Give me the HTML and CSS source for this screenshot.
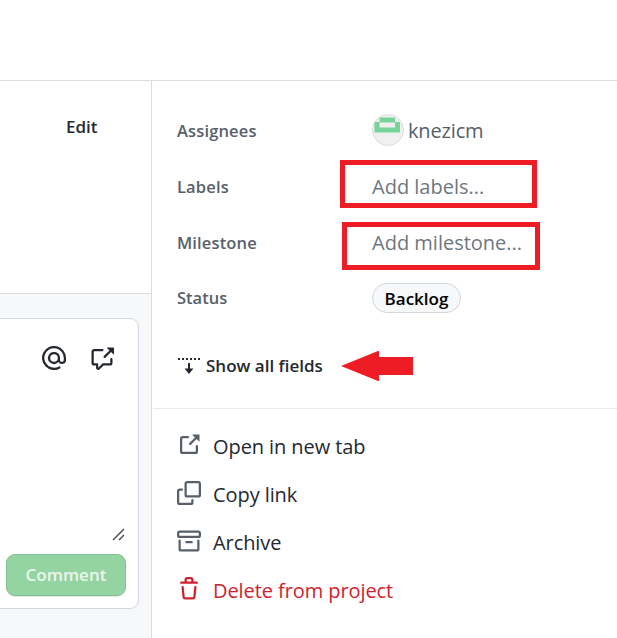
FILE: index.html
```html
<!DOCTYPE html>
<html lang="en">
<head>
<meta charset="utf-8">
<title>Project item</title>
<link rel="stylesheet" href="styles.css">
</head>
<body>
<header class="topbar"></header>
<div class="layout">
  <main class="content">
    <section class="description"><button class="edit">Edit</button></section>
    <section class="comments">
      <div class="editor">
        <div class="toolbar">
          <svg class="icon" viewBox="0 0 16 16"><path d="M4.75 2.37a6.501 6.501 0 0 0 6.5 11.26.75.75 0 0 1 .75 1.298A7.999 7.999 0 0 1 .989 4.148 8 8 0 0 1 16 7.75v1.5a2.75 2.75 0 0 1-5.072 1.475 3.999 3.999 0 0 1-6.65-4.19A4 4 0 0 1 12 8v1.25a1.25 1.25 0 0 0 2.5 0V7.867a6.5 6.5 0 0 0-9.75-5.496ZM10.5 8a2.5 2.5 0 1 0-5 0 2.5 2.5 0 0 0 5 0Z"/></svg>
          <svg class="icon" viewBox="0 0 16 16"><path d="M2.75 3.5a.25.25 0 0 0-.25.25v7.5c0 .138.112.25.25.25h2a.75.75 0 0 1 .75.75v2.19l2.72-2.72a.749.749 0 0 1 .53-.22h4.5a.25.25 0 0 0 .25-.25v-2.5a.75.75 0 0 1 1.5 0v2.5A1.75 1.75 0 0 1 13.25 13H9.06l-2.573 2.573A1.458 1.458 0 0 1 4 14.543V13H2.75A1.75 1.75 0 0 1 1 11.25v-7.5C1 2.784 1.784 2 2.75 2h5.5a.75.75 0 0 1 0 1.5ZM16 1.25v4.146a.25.25 0 0 1-.427.177L14.03 4.03l-3.75 3.75a.75.75 0 0 1-1.06-1.06l3.75-3.75-1.543-1.543A.25.25 0 0 1 11.604 1h4.146a.25.25 0 0 1 .25.25Z"/></svg>
        </div>
        <svg class="grip" viewBox="0 0 13 13"><path d="M1 12 12 1M7 12l5-5"/></svg>
        <button class="comment">Comment</button>
      </div>
    </section>
  </main>
  <aside class="sidebar">
    <dl class="fields">
      <div class="field"><dt>Assignees</dt><dd class="user">
        <svg class="avatar" viewBox="0 0 32 32"><circle cx="16" cy="16" r="15.5" fill="#f0f0f0" stroke="#dcdcdc"/><path fill="#76d499" fill-rule="evenodd" d="M7.500 3.500h15.500V8h5v10.500H2.500V8h5zM7.500 8.500v5H23v-5z"/></svg>
        <span class="name">knezicm</span></dd></div>
      <div class="field"><dt>Labels</dt><dd class="placeholder add-labels">Add labels...<i class="mark mark-labels"></i></dd></div>
      <div class="field"><dt>Milestone</dt><dd class="placeholder">Add milestone...<i class="mark mark-milestone"></i></dd></div>
      <div class="field status"><dt>Status</dt><dd><span class="pill">Backlog</span></dd></div>
    </dl>
    <div class="show-all">
      <svg class="expand" viewBox="0 0 24 24"><path class="dots" d="M1 5h22"/><path d="M11 9h2v5.500h3.500L12 20l-4.500-5.500H11z"/></svg>
      <span>Show all fields</span>
      <svg class="pointer" viewBox="0 0 72 30"><path d="M0 15 37 0h1v6h34v18H38v6h-1z"/></svg>
    </div>
    <ul class="menu">
      <li><svg class="icon" viewBox="0 0 16 16"><path d="M3.75 2h3.5a.75.75 0 0 1 0 1.5h-3.5a.25.25 0 0 0-.25.25v8.5c0 .138.112.25.25.25h8.5a.25.25 0 0 0 .25-.25v-3.5a.75.75 0 0 1 1.5 0v3.5A1.75 1.75 0 0 1 12.25 14h-8.5A1.75 1.75 0 0 1 2 12.25v-8.5C2 2.784 2.784 2 3.75 2Zm6.854-1h4.146a.25.25 0 0 1 .25.25v4.146a.25.25 0 0 1-.427.177L13.03 4.03 9.28 7.78a.75.75 0 0 1-1.06-1.06l3.75-3.75-1.543-1.543A.25.25 0 0 1 10.604 1Z"/></svg><span class="open">Open in new tab</span></li>
      <li><svg class="icon" viewBox="0 0 16 16"><path d="M0 6.75C0 5.784.784 5 1.75 5h1.5a.75.75 0 0 1 0 1.5h-1.5a.25.25 0 0 0-.25.25v7.5c0 .138.112.25.25.25h7.5a.25.25 0 0 0 .25-.25v-1.5a.75.75 0 0 1 1.5 0v1.5A1.75 1.75 0 0 1 9.25 16h-7.5A1.75 1.75 0 0 1 0 14.25ZM5 1.75C5 .784 5.784 0 6.75 0h7.5C15.216 0 16 .784 16 1.75v7.5A1.75 1.75 0 0 1 14.25 11h-7.5A1.75 1.75 0 0 1 5 9.25Zm1.75-.25a.25.25 0 0 0-.25.25v7.5c0 .138.112.25.25.25h7.5a.25.25 0 0 0 .25-.25v-7.5a.25.25 0 0 0-.25-.25Z"/></svg><span>Copy link</span></li>
      <li><svg class="icon" viewBox="0 0 16 16"><path d="M0 2.75C0 1.784.784 1 1.75 1h12.5c.966 0 1.75.784 1.75 1.75v1.5A1.75 1.75 0 0 1 14.25 6H1.75A1.75 1.75 0 0 1 0 4.25ZM1.75 7a.75.75 0 0 1 .75.75v5.5c0 .138.112.25.25.25h10.5a.25.25 0 0 0 .25-.25v-5.5a.75.75 0 0 1 1.5 0v5.5A1.75 1.75 0 0 1 13.25 15H2.75A1.75 1.75 0 0 1 1 13.25v-5.5A.75.75 0 0 1 1.75 7Zm0-4.5a.25.25 0 0 0-.25.25v1.5c0 .138.112.25.25.25h12.5a.25.25 0 0 0 .25-.25v-1.5a.25.25 0 0 0-.25-.25ZM6.25 8h3.5a.75.75 0 0 1 0 1.5h-3.5a.75.75 0 0 1 0-1.5Z"/></svg><span>Archive</span></li>
      <li class="danger"><svg class="icon" viewBox="0 0 16 16"><path d="M11 1.75V3h2.25a.75.75 0 0 1 0 1.5H2.75a.75.75 0 0 1 0-1.5H5V1.75C5 .784 5.784 0 6.75 0h2.5C10.216 0 11 .784 11 1.75ZM4.496 6.675l.66 6.6a.25.25 0 0 0 .249.225h5.19a.25.25 0 0 0 .249-.225l.66-6.6a.75.75 0 0 1 1.492.149l-.66 6.6A1.748 1.748 0 0 1 10.595 15h-5.19a1.75 1.75 0 0 1-1.741-1.575l-.66-6.6a.75.75 0 1 1 1.492-.15ZM6.5 1.75V3h3V1.75a.25.25 0 0 0-.25-.25h-2.5a.25.25 0 0 0-.25.25Z"/></svg><span>Delete from project</span></li>
    </ul>
  </aside>
</div>
</body>
</html>
```
FILE: styles.css
```css
* { box-sizing: border-box; }
body {
  margin: 0;
  height: 638px;
  overflow: hidden;
  background: #fff;
  color: #24292f;
  font-family: "Open Sans", "Noto Sans", sans-serif;
  font-size: 20px;
  line-height: 30px;
  white-space: nowrap;
}
button { margin: 0; padding: 0; border: 0; background: none; color: inherit; font: inherit; }
svg { display: block; flex: none; fill: currentColor; }
.icon { width: 24px; height: 24px; }
.topbar { height: 81px; border-bottom: 1px solid #d8dee4; }
.layout { display: flex; height: 557px; }
.content { display: flex; flex-direction: column; width: 152px; border-right: 1px solid #d8dee4; }
.description { height: 213px; padding: 31px 0 0 66px; border-bottom: 1px solid #d8dee4; }
.edit { display: block; font-size: 17px; font-weight: 550; }
.comments { flex: 1; padding-top: 24px; background: #f6f8fa; }
.editor {
  display: flex;
  flex-direction: column;
  align-items: flex-end;
  width: 139px;
  height: 291px;
  padding: 27px 12px 12px 0;
  border: 1px solid #d0d7de;
  border-left: 0;
  border-radius: 0 9px 9px 0;
  background: #fff;
}
.toolbar { display: flex; gap: 24px; padding-right: 12px; }
.grip { width: 13px; height: 13px; margin: auto 1px 13px 0; fill: none; stroke: #444; stroke-width: 1.4; }
.comment {
  width: 120px;
  height: 42px;
  border: 1px solid #82c293;
  border-radius: 9px;
  background: #94d3a2;
  box-shadow: 0 1px 1px rgba(27, 31, 36, .12);
  color: #eaf6ec;
  font-size: 17px;
  font-weight: 600;
}
.sidebar { flex: 1; padding-left: 1px; }
.fields { margin: 0; padding: 21px 0 0 24px; }
.field { display: flex; align-items: center; height: 56px; }
dt { width: 195px; padding-top: 2px; color: #57606a; font-size: 16.5px; font-weight: 600; letter-spacing: .15px; }
.status dt { padding-top: 0; letter-spacing: 0; }
dd { position: relative; display: flex; align-items: center; margin: 0; }
.user { gap: 4px; color: #57606a; }
.name { padding-top: 1px; letter-spacing: -.15px; }
.avatar { width: 32px; height: 32px; }
.placeholder { padding-top: 2px; color: #6e7781; }
.mark { position: absolute; border: 5px solid #ee1c25; height: 48px; }
.mark-labels { left: -32px; top: -10px; width: 197px; }
.mark-milestone { left: -30px; top: -4px; width: 198px; }
.pill {
  display: block;
  width: 89px;
  height: 30px;
  border: 1px solid #d0d7de;
  border-radius: 15px;
  background: #f6f8fa;
  color: #000;
  font-size: 17px;
  font-weight: 600;
  line-height: 29px;
  text-align: center;
}
.show-all {
  display: flex;
  align-items: center;
  height: 83px;
  padding: 0 0 3px 24px;
  border-bottom: 1px solid #e6eaee;
  font-size: 17px;
  font-weight: 600;
}
.expand { width: 24px; height: 24px; margin-right: 5px; }
.dots { fill: none; stroke: currentColor; stroke-width: 2; stroke-dasharray: 2 2; }
.pointer { width: 72px; height: 30px; margin-left: 18px; fill: #ee1c25; }
.menu { margin: 0; padding: 12px 0 0 24px; list-style: none; }
.menu li { display: flex; align-items: center; gap: 12px; height: 48px; letter-spacing: -.08px; }
.menu span { padding-top: 3px; }
.menu .icon { color: #57606a; }
.menu .danger, .menu .danger .icon { color: #cf222e; }
```
